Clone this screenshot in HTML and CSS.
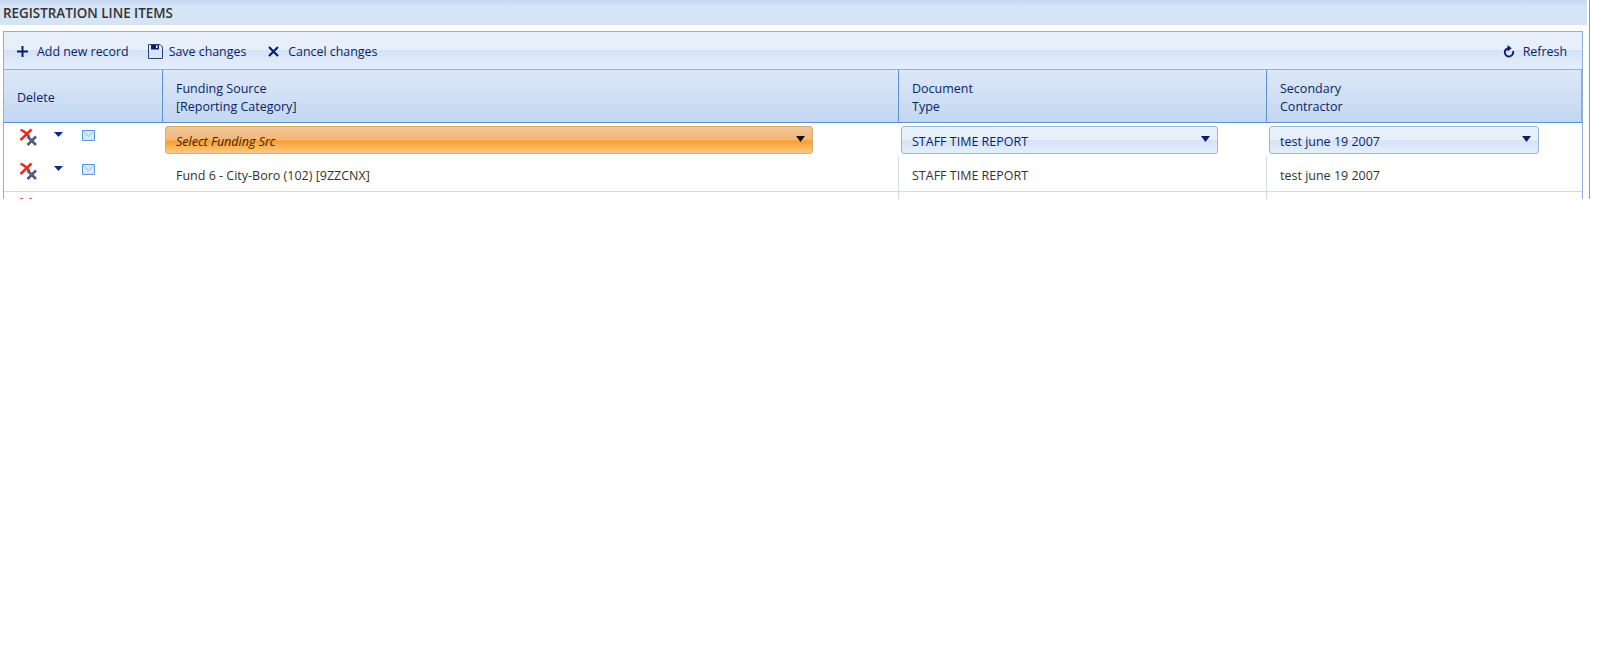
FILE: index.html
```html
<!DOCTYPE html>
<html lang="en">
<head>
<meta charset="utf-8">
<title>Registration Line Items</title>
<link rel="stylesheet" href="styles.css">
</head>
<body>
<main class="frame">
  <h1 class="title">REGISTRATION LINE ITEMS</h1>
  <section class="grid">
    <div class="toolbar">
      <a class="tool tool-add"><svg class="ticon" width="11" height="11" viewBox="0 0 11 11"><path d="M5.500 0v11M0 5.500h11" stroke="#0a1f6b" stroke-width="2" fill="none"/></svg><span>Add new record</span></a>
      <a class="tool tool-save"><svg class="ticon" width="15" height="15" viewBox="0 0 15 15"><path d="M.5.5h11.500l2.500 2.500v11.500H.5z" fill="none" stroke="#2a3f80"/><path d="M3 1h8v4.500H3z" fill="#0a1f6b"/><path d="M8 1.500h1.500v2.500H8z" fill="#fff"/></svg><span>Save changes</span></a>
      <a class="tool tool-cancel"><svg class="ticon" width="11" height="11" viewBox="0 0 11 11"><path d="M1 1l9 9M10 1l-9 9" stroke="#0a1f6b" stroke-width="2.200" fill="none"/></svg><span>Cancel changes</span></a>
      <a class="tool tool-refresh"><svg class="ticon" width="12" height="13" viewBox="0 0 12 13"><path d="M6 3.100A4.200 4.200 0 1 0 10 6" stroke="#0a1f6b" stroke-width="1.900" fill="none"/><path d="M4.500 0v6.400L8.700 3.200z" fill="#0a1f6b"/></svg><span>Refresh</span></a>
    </div>
    <div class="row head">
      <div class="cell">Delete</div>
      <div class="cell">Funding Source<br>[Reporting Category]</div>
      <div class="cell">Document<br>Type</div>
      <div class="cell">Secondary<br>Contractor</div>
    </div>
    <div class="row edit">
      <div class="cell actions">
        <svg class="ix" width="18" height="19" viewBox="0 0 18 19"><path d="M1.500 13L12.500 2.500M1.500 3c3 .5 7 4.500 9 7" stroke="#ea2b20" stroke-width="2.500" fill="none"/><path d="M8.500 9.500l8.500 8.500M17 9.500L8.500 18" stroke="#4f5b78" stroke-width="2.600" fill="none"/></svg>
        <svg class="icaret" width="9" height="5" viewBox="0 0 9 5"><path d="M0 0h9L4.500 5z" fill="#0a2a8c"/></svg>
        <svg class="imail" width="13" height="11" viewBox="0 0 13 11"><path d="M.5.500h12v10H.5z" fill="#d8e6fb" stroke="#5f94dc"/><path d="M.5.500l6 6 6-6" fill="none" stroke="#9fbfea"/></svg>
      </div>
      <div class="cell pick"><div class="select hot"><em>Select Funding Src</em><svg width="9" height="6" viewBox="0 0 9 6"><path d="M0 0h9L4.500 6z" fill="#111"/></svg></div></div>
      <div class="cell pick"><div class="select"><span>STAFF TIME REPORT</span><svg width="9" height="6" viewBox="0 0 9 6"><path d="M0 0h9L4.500 6z" fill="#0a1f6b"/></svg></div></div>
      <div class="cell pick"><div class="select"><span>test june 19 2007</span><svg width="9" height="6" viewBox="0 0 9 6"><path d="M0 0h9L4.500 6z" fill="#0a1f6b"/></svg></div></div>
    </div>
    <div class="row data">
      <div class="cell actions">
        <svg class="ix" width="18" height="19" viewBox="0 0 18 19"><path d="M1.500 13L12.500 2.500M1.500 3c3 .5 7 4.500 9 7" stroke="#ea2b20" stroke-width="2.500" fill="none"/><path d="M8.500 9.500l8.500 8.500M17 9.500L8.500 18" stroke="#4f5b78" stroke-width="2.600" fill="none"/></svg>
        <svg class="icaret" width="9" height="5" viewBox="0 0 9 5"><path d="M0 0h9L4.500 5z" fill="#0a2a8c"/></svg>
        <svg class="imail" width="13" height="11" viewBox="0 0 13 11"><path d="M.5.500h12v10H.5z" fill="#d8e6fb" stroke="#5f94dc"/><path d="M.5.500l6 6 6-6" fill="none" stroke="#9fbfea"/></svg>
      </div>
      <div class="cell">Fund 6 - City-Boro (102) [9ZZCNX]</div>
      <div class="cell">STAFF TIME REPORT</div>
      <div class="cell">test june 19 2007</div>
    </div>
    <div class="row data">
      <div class="cell actions">
        <svg class="ix" width="18" height="19" viewBox="0 0 18 19"><path d="M1.500 13L12.500 2.500M1.500 3c3 .5 7 4.500 9 7" stroke="#ea2b20" stroke-width="2.500" fill="none"/><path d="M8.500 9.500l8.500 8.500M17 9.500L8.500 18" stroke="#4f5b78" stroke-width="2.600" fill="none"/></svg>
      </div>
      <div class="cell"></div>
      <div class="cell"></div>
      <div class="cell"></div>
    </div>
  </section>
</main>
</body>
</html>
```
FILE: styles.css
```css
* { box-sizing: border-box; }
html, body { margin: 0; padding: 0; background: #fff; }
body { font-family: "Open Sans", "Noto Sans", sans-serif; font-size: 12.5px; color: #333; }
.frame {
  width: 1590px;
  height: 199px;
  overflow: hidden;
  border-right: 1px solid #7f9cc4;
}
.title {
  margin: 0;
  width: 1587px;
  height: 25px;
  padding: 5px 0 0 3px;
  font-size: 13.4px;
  line-height: 17px;
  font-weight: 600;
  color: #333;
  background: linear-gradient(#c4d8f2 0, #d6e4f7 7px, #d6e4f7 100%);
}
.grid {
  margin: 6px 0 0 3px;
  width: 1580px;
  border-left: 1px solid #8fb0dc;
  border-right: 1px solid #8fb0dc;
  border-top: 1px solid #8fb0dc;
}
.toolbar {
  display: flex;
  align-items: center;
  height: 37px;
  padding: 2px 15px 0 13px;
  font-size: 12.4px;
  color: #0a1f6b;
  background: linear-gradient(#e7effb 0, #e7effb 50%, #d5e2f6 50%, #e5eefb 100%);
}
.tool { display: flex; align-items: center; color: #0a1f6b; }
.ticon { flex: none; }
.tool-add span { margin-left: 9px; }
.tool-save { margin-left: 19px; }
.tool-save span { margin-left: 6px; }
.tool-cancel { margin-left: 22px; }
.tool-cancel span { margin-left: 9px; }
.tool-refresh { margin-left: auto; }
.tool-refresh span { margin-left: 8px; }
.row {
  display: grid;
  grid-template-columns: 159px 736px 368px 1fr;
}
.head {
  height: 54px;
  color: #0a1f6b;
  line-height: 18px;
  border-top: 1px solid #92b2dd;
  border-bottom: 1px solid #5d90d6;
  background: linear-gradient(#dde8f8, #c3d7f1);
}
.head .cell {
  padding: 10px 0 0 13px;
  white-space: nowrap;
  border-right: 1px solid #5d90d6;
}
.head .cell:first-child { padding-top: 19px; }
.head .cell:last-child { border-right: 1px solid #8fa8cc; }
.edit { height: 34px; }
.pick { padding: 3px 0 0 2px; }
.edit .pick:nth-child(2) .select { width: 648px; }
.edit .pick:nth-child(3) .select { width: 317px; }
.edit .pick:nth-child(4) .select { width: 270px; }
.select {
  display: flex;
  align-items: center;
  justify-content: space-between;
  height: 28px;
  padding: 2px 7px 0 10px;
  border: 1px solid #99b8e0;
  border-radius: 3px;
  color: #0a1f6b;
  background: linear-gradient(#e7effb 0, #e7effb 50%, #d5e2f6 50%, #e5eefb 100%);
}
.select svg { margin-top: -5px; }
.select.hot {
  color: #3a2405;
  border-color: #d8ad72;
  background: linear-gradient(#efc69b 0, #f6b675 50%, #fa9d2e 54%, #fdca82 100%);
}
.select em { font-style: italic; }
.data { height: 35px; border-bottom: 1px solid #cfdaea; }
.data .cell {
  padding: 10px 0 0 13px;
  border-right: 1px solid #cfdaea;
  line-height: 18px;
  white-space: nowrap;
}
.data .cell:last-child { border-right: 0; }
.actions { position: relative; }
.edit .actions, .data .actions { border-right: 0; padding: 0; }
.ix { position: absolute; left: 15px; top: 4px; }
.icaret { position: absolute; left: 50px; top: 9px; }
.imail { position: absolute; left: 78px; top: 7px; }
```
